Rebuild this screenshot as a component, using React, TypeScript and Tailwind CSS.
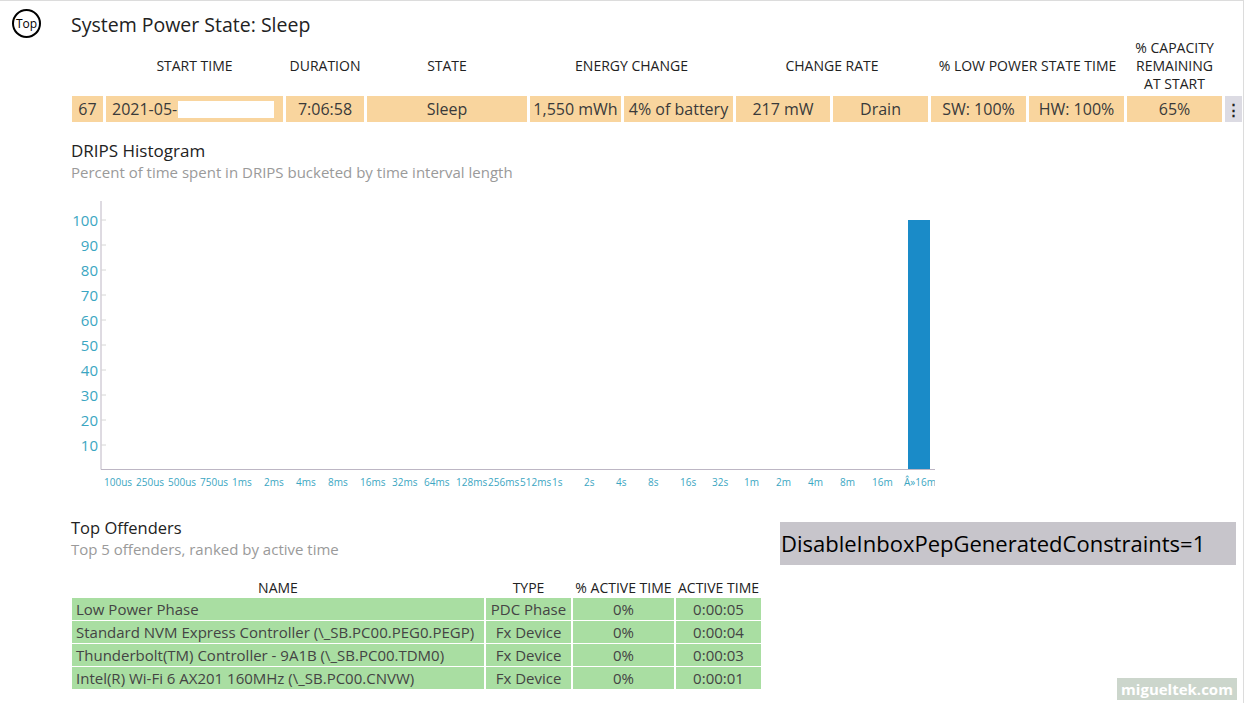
const font = { fontFamily: '"Open Sans", "Noto Sans", sans-serif' };

const buckets = [
  "100us", "250us", "500us", "750us", "1ms", "2ms", "4ms", "8ms", "16ms", "32ms",
  "64ms", "128ms", "256ms", "512ms", "1s", "2s", "4s", "8s", "16s", "32s",
  "1m", "2m", "4m", "8m", "16m", "Â»16m",
];

const offenders = [
  { name: "Low Power Phase", type: "PDC Phase", pct: "0%", time: "0:00:05" },
  { name: "Standard NVM Express Controller (\\_SB.PC00.PEG0.PEGP)", type: "Fx Device", pct: "0%", time: "0:00:04" },
  { name: "Thunderbolt(TM) Controller - 9A1B (\\_SB.PC00.TDM0)", type: "Fx Device", pct: "0%", time: "0:00:03" },
  { name: "Intel(R) Wi-Fi 6 AX201 160MHz (\\_SB.PC00.CNVW)", type: "Fx Device", pct: "0%", time: "0:00:01" },
];

function Histogram() {
  const teal = "#3ba6c2";
  return (
    <svg width="875" height="300" className="block">
      <line x1="41" y1="7" x2="41" y2="275.5" stroke="#bdb6c4" strokeWidth="1" />
      <line x1="41" y1="275.5" x2="875" y2="275.5" stroke="#bdb6c4" strokeWidth="1" />
      {[100, 90, 80, 70, 60, 50, 40, 30, 20, 10].map((v, i) => {
        const y = 26 + i * 25;
        return (
          <g key={v}>
            <line x1="41" y1={y} x2="46" y2={y} stroke="#d6d6d6" />
            <text x="38" y={y + 5.5} textAnchor="end" fontSize="15" fill={teal} fontFamily='"Open Sans", sans-serif'>
              {v}
            </text>
          </g>
        );
      })}
      <rect x="848" y="26" width="22" height="249" fill="#1a8bc8" />
      {buckets.map((b, i) => (
        <text key={b} x={44 + i * 32} y="292" fontSize="10" fill={teal} fontFamily='"Open Sans", sans-serif'>
          {b}
        </text>
      ))}
    </svg>
  );
}

export default function App() {
  const cell = "flex h-[26px] items-center justify-center whitespace-nowrap bg-[#f9d59e] text-[16px] text-[#3a3a3a]";
  const head = "flex items-center justify-center text-center text-[14px] leading-[18px] text-[#222]";
  const green = "flex h-[22px] items-center whitespace-nowrap bg-[#a9dea2] text-[15px] text-[#444]";

  return (
    <div className="relative h-[703px] w-[1244px] overflow-hidden border-t border-r border-[#dcdcdc] bg-white" style={font}>
      <div className="flex">
        <div className="w-[71px] shrink-0">
          <div className="ml-[12px] mt-[8px] flex h-[29px] w-[29px] items-center justify-center rounded-full border-2 border-black text-[12px] text-black">
            Top
          </div>
        </div>

        <div className="flex-1">
          <h1 className="pt-[11px] text-[19.5px] leading-[25px] text-[#222]">System Power State: Sleep</h1>

          <div className="mt-[2px] grid grid-cols-[31px_177px_78px_160px_91px_109px_94px_95px_95px_95px_95px_17px] gap-x-[3px] gap-y-[3px] pl-[1px]">
            <div className="h-[54px]" />
            <div className={head}>START TIME</div>
            <div className={head}>DURATION</div>
            <div className={head}>STATE</div>
            <div className={`${head} col-span-2`}>ENERGY CHANGE</div>
            <div className={`${head} col-span-2`}>CHANGE RATE</div>
            <div className={`${head} col-span-2`}>% LOW POWER STATE TIME</div>
            <div className={head}>% CAPACITY<br />REMAINING<br />AT START</div>
            <div />

            <div className={cell}>67</div>
            <div className={`${cell} justify-start pl-[6px]`}>
              <span>2021-05-</span>
              <span className="ml-[1px] h-[17px] w-[96px] bg-white" />
            </div>
            <div className={cell}>7:06:58</div>
            <div className={cell}>Sleep</div>
            <div className={cell}>1,550 mWh</div>
            <div className={cell}>4% of battery</div>
            <div className={cell}>217 mW</div>
            <div className={cell}>Drain</div>
            <div className={cell}>SW: 100%</div>
            <div className={cell}>HW: 100%</div>
            <div className={cell}>65%</div>
            <div className="flex h-[26px] items-center justify-center bg-[#dcdbe3] text-[15px] font-bold text-[#222]">⋮</div>
          </div>

          <h2 className="mt-[19px] text-[17px] leading-[20px] text-[#222]">DRIPS Histogram</h2>
          <p className="mt-[1px] text-[15px] leading-[20px] text-[#9a9a9a]">Percent of time spent in DRIPS bucketed by time interval length</p>

          <div className="ml-[-11px] mt-[12px]">
            <Histogram />
          </div>

          <div className="mt-[24px] flex">
            <div className="w-[690px] shrink-0">
              <h2 className="text-[16.5px] leading-[20px] text-[#222]">Top Offenders</h2>
              <p className="mt-[1px] text-[15px] leading-[20px] text-[#9a9a9a]">Top 5 offenders, ranked by active time</p>

              <div className="mt-[19px] grid grid-cols-[412px_85px_101px_85px] gap-x-[2px] gap-y-[1px] pl-[1px]">
                <div className={`${head} h-[19px] text-[14px]`}>NAME</div>
                <div className={`${head} h-[19px] text-[14px]`}>TYPE</div>
                <div className={`${head} h-[19px] whitespace-nowrap text-[14px]`}>% ACTIVE TIME</div>
                <div className={`${head} h-[19px] whitespace-nowrap text-[14px]`}>ACTIVE TIME</div>
                {offenders.map((o) => (
                  <div key={o.name} className="contents">
                    <div className={`${green} pl-[4px]`}>{o.name}</div>
                    <div className={`${green} justify-center`}>{o.type}</div>
                    <div className={`${green} justify-center`}>{o.pct}</div>
                    <div className={`${green} justify-center`}>{o.time}</div>
                  </div>
                ))}
              </div>
            </div>

            <div className="ml-[19px] mt-[4px] flex h-[43px] w-[456px] items-center bg-[#c7c5cb] pl-[1px] text-[22px] text-black">
              DisableInboxPepGeneratedConstraints=1
            </div>
          </div>
        </div>
      </div>

      <div className="absolute bottom-[3px] right-[6px] flex h-[22px] w-[120px] items-center justify-center bg-[#ccd6cc] text-[15px] font-bold text-white">
        migueltek.com
      </div>
    </div>
  );
}
